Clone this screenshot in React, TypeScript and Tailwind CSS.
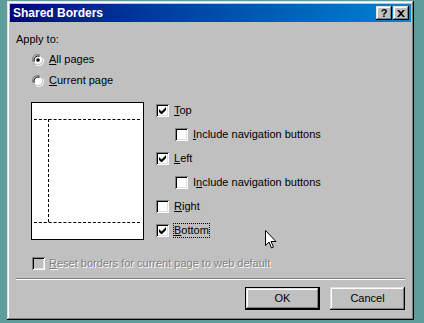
const raised =
  "shadow-[inset_-1px_-1px_0_#000,inset_1px_1px_0_#dfdfdf,inset_-2px_-2px_0_#808080,inset_2px_2px_0_#fff]";
const sunken =
  "shadow-[inset_1px_1px_0_#808080,inset_-1px_-1px_0_#fff,inset_2px_2px_0_#000,inset_-2px_-2px_0_#dfdfdf]";

const U = ({ children }: { children: string }) => <span className="underline">{children}</span>;

const Check = ({ checked, disabled }: { checked?: boolean; disabled?: boolean }) => (
  <span
    className={`w-[13px] h-[13px] shrink-0 flex items-center justify-center ${sunken} ${
      disabled ? "bg-[#c0c0c0]" : "bg-white"
    }`}
  >
    {checked && (
      <svg width="7" height="7" viewBox="0 0 7 7">
        <path d="M0 2v3l2 2h1l4-4V0L2.5 4.5z" fill="#000" />
      </svg>
    )}
  </span>
);

const Radio = ({ checked }: { checked?: boolean }) => (
  <svg width="12" height="12" viewBox="0 0 12 12" className="shrink-0">
    <path d="M8 1.1A5 5 0 0 0 1.1 8" stroke="#808080" fill="none" strokeWidth="1" />
    <path d="M10.9 4A5 5 0 0 1 4 10.9" stroke="#fff" fill="none" strokeWidth="1" />
    <circle cx="6" cy="6" r="4" fill="#fff" />
    <path d="M7.5 2.3A4 4 0 0 0 2.3 7.5" stroke="#000" fill="none" strokeWidth="1" />
    {checked && <circle cx="6" cy="6" r="1.8" fill="#000" />}
  </svg>
);

const TitleBtn = ({ children }: { children: React.ReactNode }) => (
  <span className={`w-[16px] h-[14px] bg-[#c0c0c0] flex items-center justify-center ${raised}`}>
    {children}
  </span>
);

export default function App() {
  return (
    <div
      className="w-[424px] h-[323px] bg-[#5f9c9c] pt-[1px] pl-[7px] text-[11px] leading-[13px] text-black overflow-hidden"
      style={{ fontFamily: '"Liberation Sans", Arial, sans-serif' }}
    >
      <div className={`relative w-[407px] h-[319px] bg-[#c0c0c0] p-[3px] ${raised}`}>
        <div className="h-[18px] bg-gradient-to-r from-[#000080] to-[#1084d0] flex items-center justify-between pl-[3px] pr-[2px]">
          <span className="text-white font-bold text-[12px] leading-[14px]">Shared Borders</span>
          <div className="flex gap-[1px]">
            <TitleBtn>
              <span className="font-bold text-[11px] leading-none">?</span>
            </TitleBtn>
            <TitleBtn>
              <svg width="8" height="7" viewBox="0 0 8 7">
                <path d="M0 0h2l2 2 2-2h2L5 3.5 8 7H6L4 5 2 7H0l3-3.5z" fill="#000" />
              </svg>
            </TitleBtn>
          </div>
        </div>

        <div className="pl-[6px] pt-[11px]">
          <div>Apply to:</div>
          <div className="pl-[16px] mt-[7px] flex flex-col gap-[8px]">
            <label className="flex items-center gap-[5px]">
              <Radio checked />
              <span>
                <U>A</U>ll pages
              </span>
            </label>
            <label className="flex items-center gap-[5px]">
              <Radio />
              <span>
                <U>C</U>urrent page
              </span>
            </label>
          </div>

          <div className="flex mt-[15px] pl-[15px]">
            <div className="relative w-[113px] h-[138px] bg-white border border-black">
              <div className="absolute left-[2px] right-[3px] top-[16px] border-t border-dashed border-black" />
              <div className="absolute left-[2px] right-[3px] top-[119px] border-t border-dashed border-black" />
              <div className="absolute left-[16px] top-[16px] h-[103px] border-l border-dashed border-black" />
            </div>

            <div className="ml-[12px] pt-[2px] flex flex-col gap-[11px]">
              <label className="flex items-center gap-[5px]">
                <Check checked />
                <span>
                  <U>T</U>op
                </span>
              </label>
              <label className="flex items-center gap-[5px] pl-[19px]">
                <Check />
                <span>
                  <U>I</U>nclude navigation buttons
                </span>
              </label>
              <label className="flex items-center gap-[5px]">
                <Check checked />
                <span>
                  <U>L</U>eft
                </span>
              </label>
              <label className="flex items-center gap-[5px] pl-[19px]">
                <Check />
                <span>
                  I<U>n</U>clude navigation buttons
                </span>
              </label>
              <label className="flex items-center gap-[5px]">
                <Check />
                <span>
                  <U>R</U>ight
                </span>
              </label>
              <label className="flex items-center gap-[5px]">
                <Check checked />
                <span className="outline outline-1 outline-dotted outline-black">
                  <U>B</U>ottom
                </span>
              </label>
            </div>
          </div>

          <label className="flex items-center gap-[4px] mt-[17px] pl-[16px]">
            <Check disabled />
            <span className="text-[#808080] [text-shadow:1px_1px_0_#fff]">
              <U>R</U>eset borders for current page to web default
            </span>
          </label>
        </div>

        <div className="mx-[6px] mt-[8px] border-t border-[#808080] border-b border-b-white" />

        <div className="flex justify-end gap-[10px] pr-[6px] mt-[7px]">
          <button className={`w-[75px] h-[23px] bg-[#c0c0c0] border border-black ${raised}`}>
            OK
          </button>
          <button className={`w-[75px] h-[23px] bg-[#c0c0c0] ${raised}`}>Cancel</button>
        </div>

        <svg
          className="absolute left-[258px] top-[229px]"
          width="12"
          height="19"
          viewBox="0 0 12 19"
        >
          <path
            d="M0.5 0.5v15l3.5-3.5 2.5 6 2-1-2.5-5.5h5z"
            fill="#fff"
            stroke="#000"
            strokeWidth="1"
          />
        </svg>
      </div>
    </div>
  );
}
